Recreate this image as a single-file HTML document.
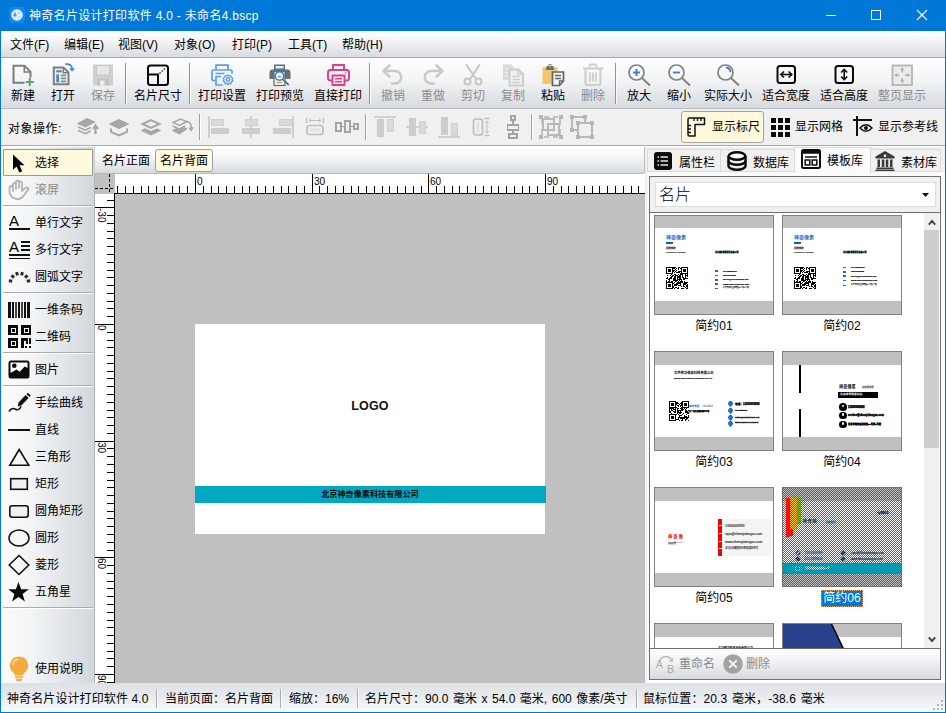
<!DOCTYPE html>
<html lang="zh-CN">
<head>
<meta charset="utf-8">
<title>神奇名片设计打印软件 4.0</title>
<style>
*{box-sizing:border-box;margin:0;padding:0}
html,body{width:946px;height:713px;overflow:hidden;background:#f0f0f0}
body{font-family:"Liberation Sans","Noto Sans CJK SC",sans-serif;font-size:12px;color:#000;position:relative;line-height:1}
.a{position:absolute}
svg{position:absolute;overflow:visible}
#frame{position:absolute;left:0;top:0;width:946px;height:713px;border:1px solid #0078d7;pointer-events:none;z-index:50}
#title{position:absolute;left:0;top:0;width:946px;height:31px;background:#0078d7;color:#fff}
#title .txt{position:absolute;left:29px;top:1px;line-height:31px;font-size:12px;white-space:nowrap;letter-spacing:.3px}
#menu{position:absolute;left:1px;top:31px;width:944px;height:26px;background:linear-gradient(#ffffff 0,#f6f7f8 30%,#e7e9eb 65%,#d9dce0 100%)}
#menu span{position:absolute;top:1px;line-height:26px;font-size:12px;white-space:nowrap}
#tb{position:absolute;left:1px;top:57px;width:944px;height:52px;background:linear-gradient(#fdfdfe 0,#f2f4f5 45%,#e3e6e9 75%,#d7dbdf 100%);border-top:1px solid #a9acaf;border-bottom:1px solid #b9bdc2}
.tl{position:absolute;top:89px;height:14px;line-height:14px;font-size:12px;white-space:nowrap;text-align:center;width:60px;margin-left:-30px}
.dis{color:#8c8c8c}
.vsep{position:absolute;width:2px;border-left:1px solid #909498;border-right:1px solid #fbfbfb}
#ob{position:absolute;left:1px;top:109px;width:944px;height:37px;background:#f0f0f0;border-bottom:1px solid #a9a9a9}
</style>
</head>
<body>
<div id="frame"></div>
<div id="title">
<svg style="left:9px;top:7px" width="16" height="16" viewBox="0 0 16 16"><rect width="16" height="16" rx="4" fill="#1787f5"/><circle cx="8" cy="8" r="5.8" fill="#dfeeff"/><circle cx="6" cy="8" r="1.6" fill="#3f96f5"/><rect x="5.5" y="5" width="1" height="3" fill="#3f96f5"/><path d="M9 6.2h2.4M9.3 10h2" stroke="#9cc8fb" stroke-width="1.2" fill="none"/></svg>
<span class="txt">神奇名片设计打印软件 4.0 - 未命名4.bscp</span>
<svg style="left:826px;top:10px" width="101" height="11" viewBox="0 0 101 11" shape-rendering="crispEdges"><rect x="0" y="5" width="10" height="1" fill="#fff"/><rect x="45.5" y="0.5" width="9" height="9" fill="none" stroke="#fff" stroke-width="1"/><path d="M91 0l10 10M101 0L91 10" stroke="#fff" stroke-width="1.1" fill="none" shape-rendering="auto"/></svg>
</div>
<div id="menu">
<span style="left:9px">文件(F)</span><span style="left:63px">编辑(E)</span><span style="left:117px">视图(V)</span><span style="left:173px">对象(O)</span><span style="left:231px">打印(P)</span><span style="left:287px">工具(T)</span><span style="left:341px">帮助(H)</span>
</div>
<div id="tb"></div>
<!-- toolbar icons -->
<svg style="left:11px;top:63px" width="24" height="24" viewBox="0 0 24 24" fill="none"><path d="M13.500 19.700H2.500V2.800h11l6 6v5.700" stroke="#7d7d7d" stroke-width="2" stroke-linejoin="miter"/><path d="M13.300 2.800v6.200h6.200" stroke="#7d7d7d" stroke-width="1.600"/><path d="M14.800 19h8M18.800 15v8" stroke="#5aa083" stroke-width="2"/></svg>
<svg style="left:51px;top:63px" width="24" height="24" viewBox="0 0 24 24" fill="none"><path d="M2.800 4.500h9.700l5 5V21.300H2.800z" stroke="#7d7d7d" stroke-width="2" fill="#eef2f6"/><path d="M12.300 4.500v5.200h5.200" stroke="#7d7d7d" stroke-width="1.500"/><rect x="5.300" y="7.200" width="5.400" height="2.200" fill="#4a86c8"/><rect x="5.300" y="11.300" width="2.700" height="8.200" fill="#4a86c8"/><path d="M9.800 12.400h5.400M9.800 15.400h5.400M9.800 18.400h5.400" stroke="#8a8a8a" stroke-width="1.600"/><path d="M14.300 1.200c4.200-.6 6.700 1.300 6.800 4.800" stroke="#4a86c8" stroke-width="1.800"/><path d="M18.200 5.400l2.900 3.300 2.800-3.500z" fill="#4a86c8"/></svg>
<svg style="left:91px;top:63px" width="24" height="24" viewBox="0 0 24 24"><rect x="2" y="1.500" width="20" height="21" fill="#d0d0d0"/><rect x="5.500" y="2.500" width="13" height="9.500" fill="#e6e6e6" stroke="#c6c6c6" stroke-width="1"/><rect x="6" y="15.500" width="12" height="7" fill="#c2c2c2"/><rect x="9" y="17.500" width="4.500" height="5" fill="#ededed"/></svg>
<svg style="left:146px;top:63px" width="24" height="24" viewBox="0 0 24 24" fill="none"><rect x="2" y="2.5" width="20" height="19.5" rx="2.5" stroke="#0a0a0a" stroke-width="2"/><path d="M2 11.5h10V22" stroke="#0a0a0a" stroke-width="2"/><path d="M13.5 10.5l6.5-6" stroke="#222" stroke-width="1.5" stroke-dasharray="1.4 1.6"/></svg>
<svg style="left:210px;top:63px" width="24" height="24" viewBox="0 0 24 24" fill="none" stroke="#5b9cec" stroke-width="1.700"><path d="M6 7V2.200h12V7"/><path d="M5 17.500H3.600Q2 17.500 2 15.900V8.600Q2 7 3.600 7h16.800Q22 7 22 8.600V10.500"/><path d="M5.500 10.500h9M5.500 13.500h5.500"/><path d="M12.500 22H6v-8.500"/><circle cx="18" cy="16.500" r="1.700" stroke-width="1.400"/><path d="M18 11.800l1.100 1.300 1.700-.4.400 1.700 1.600.8-.8 1.500.8 1.500-1.600.8-.4 1.700-1.700-.4-1.100 1.300-1.100-1.300-1.700.4-.4-1.700-1.600-.8.800-1.500-.8-1.500 1.600-.8.400-1.700 1.700.4z" stroke-width="1.300"/></svg>
<svg style="left:268px;top:63px" width="24" height="24" viewBox="0 0 24 24" fill="none"><rect x="6" y="1.500" width="11" height="6" fill="#6a6a6a"/><rect x="7.500" y="3" width="8" height="2.500" fill="#e8eef5"/><path d="M1.500 9.500q0-3 3-3h15q3 0 3 3v6.500h-21z" fill="#6d6d6d"/><rect x="6" y="8" width="11" height="14.500" fill="#f1f1f1" stroke="#6a6a6a" stroke-width="1.200"/><rect x="6" y="7" width="11" height="2" fill="#3c78b8"/><path d="M8.500 19.500h6" stroke="#e0a040" stroke-width="1.200"/><circle cx="11.500" cy="13" r="4.300" fill="#eaf2fb" stroke="#3c78b8" stroke-width="1.500"/><path d="M9.500 14.200q2-3 4 0z" fill="#777"/><path d="M14.800 16.300l6 5.700" stroke="#3c78b8" stroke-width="1.800"/></svg>
<svg style="left:326px;top:63px" width="24" height="24" viewBox="0 0 24 24" fill="none" stroke="#e6388c" stroke-width="1.900"><path d="M7 7V2h11v5"/><path d="M6.500 17.500H4.500Q2 17.500 2 15V9.500Q2 7 4.500 7h16Q23 7 23 9.500V15q0 2.500-2.500 2.500H18.500"/><path d="M6.500 12.500h12V22h-12z"/><path d="M9 15.700h7M9 18.700h7" stroke-width="1.500"/><circle cx="19.500" cy="10" r=".8" fill="#e6388c" stroke="none"/></svg>
<svg style="left:381px;top:63px" width="24" height="24" viewBox="0 0 24 24" fill="none" stroke="#c9c9c9" stroke-width="2.600" stroke-linecap="round" stroke-linejoin="round"><path d="M8.500 2.500L2.500 8l6 5.500"/><path d="M3.500 8h10.500a6 6 0 0 1 0 12.500h-3"/></svg>
<svg style="left:421px;top:63px" width="24" height="24" viewBox="0 0 24 24" fill="none" stroke="#c9c9c9" stroke-width="2.600" stroke-linecap="round" stroke-linejoin="round"><path d="M15.500 2.500L21.500 8l-6 5.500"/><path d="M20.500 8H10a6 6 0 0 0 0 12.500h3"/></svg>
<svg style="left:461px;top:63px" width="24" height="24" viewBox="0 0 24 24" fill="none" stroke="#c6c6c6" stroke-width="2"><path d="M5.500 2l9.500 14M18.500 2L9 16" stroke-linecap="round"/><circle cx="6.500" cy="18.500" r="3"/><circle cx="17.500" cy="18.500" r="3"/></svg>
<svg style="left:501px;top:63px" width="24" height="24" viewBox="0 0 24 24" fill="none"><path d="M2 1.500h8l3 3V17H2z" fill="#d9d9d9"/><path d="M4 6h3M4 9.500h3M4 13h3" stroke="#efefef" stroke-width="1.500"/><path d="M8.500 6.500h9l4.500 4.500v11.500H8.500z" fill="#f0f0f0" stroke="#cdcdcd" stroke-width="2"/><path d="M17 6.500V11h5" stroke="#cdcdcd" stroke-width="1.500"/><path d="M11.500 13.500h7.500M11.500 16.500h7.500M11.500 19.500h7.500" stroke="#cdcdcd" stroke-width="1.500"/></svg>
<svg style="left:541px;top:63px" width="24" height="24" viewBox="0 0 24 24" fill="none"><rect x="1.500" y="4" width="15" height="17" rx="1.500" fill="#f2c56e"/><path d="M5.500 4.500V3h2V1.200h3V3h2v1.500l1 2.500h-9z" fill="#737373"/><rect x="8" y="2" width="2" height="1.500" fill="#d9d9d9"/><path d="M11.500 9h11v9l-4 4.500h-7z" fill="#f3f3f3" stroke="#666" stroke-width="1.700"/><path d="M14 12.500h6M14 15.500h6" stroke="#666" stroke-width="1.500"/><path d="M18.500 22v-4h4" stroke="#666" stroke-width="1.300"/></svg>
<svg style="left:581px;top:63px" width="24" height="24" viewBox="0 0 24 24" fill="none" stroke="#cfcfcf"><path d="M2 5.500h20" stroke-width="2.200"/><path d="M8.500 5V3q0-1.500 1.500-1.500h4q1.500 0 1.500 1.500v2" stroke-width="1.800"/><path d="M4.500 6.500V20q0 2 2 2h11q2 0 2-2V6.500" stroke-width="2.200"/><path d="M9 9.500v9M12 9.500v9M15 9.500v9" stroke-width="1.800"/></svg>
<svg style="left:627px;top:63px" width="24" height="24" viewBox="0 0 24 24" fill="none"><circle cx="9.500" cy="9.500" r="7.500" stroke="#808080" stroke-width="1.700"/><path d="M15 15l8 7.500" stroke="#808080" stroke-width="1.900"/><path d="M6 9.500h7M9.500 6v7" stroke="#3e7ec6" stroke-width="1.800"/></svg>
<svg style="left:667px;top:63px" width="24" height="24" viewBox="0 0 24 24" fill="none"><circle cx="9.500" cy="9.500" r="7.500" stroke="#808080" stroke-width="1.700"/><path d="M15 15l8 7.500" stroke="#808080" stroke-width="1.900"/><path d="M6 9.500h7" stroke="#3e7ec6" stroke-width="1.800"/></svg>
<svg style="left:716px;top:63px" width="24" height="24" viewBox="0 0 24 24" fill="none"><circle cx="9.500" cy="9.500" r="7.500" stroke="#808080" stroke-width="1.700"/><path d="M15 15l8 7.500" stroke="#808080" stroke-width="1.900"/><path d="M10 4.500a5 5 0 0 1 4.500 4.700" stroke="#3e7ec6" stroke-width="1.800"/></svg>
<svg style="left:774px;top:63px" width="24" height="24" viewBox="0 0 24 24" fill="none" stroke="#0a0a0a"><rect x="3.500" y="3" width="17.500" height="17" rx="2.500" stroke-width="2"/><path d="M7 11.500h10.500" stroke-width="1.600"/><path d="M10 8.500l-3.200 3 3.200 3M14.500 8.500l3.200 3-3.200 3" stroke-width="1.600"/></svg>
<svg style="left:832px;top:63px" width="24" height="24" viewBox="0 0 24 24" fill="none" stroke="#0a0a0a"><rect x="3.500" y="3" width="17.500" height="17" rx="2.500" stroke-width="2"/><path d="M12.200 6.500v10" stroke-width="1.600"/><path d="M9.200 9.500l3-3.200 3 3.200M9.200 13.500l3 3.200 3-3.200" stroke-width="1.600"/></svg>
<svg style="left:890px;top:63px" width="24" height="24" viewBox="0 0 24 24" fill="none" stroke="#b4b4b4"><rect x="2.500" y="2.500" width="19.500" height="19.500" stroke-width="1.800" fill="#ebebeb"/><path d="M12.200 5v4.500M12.200 15v4.500M5 12.200h4.500M15 12.200h4.500" stroke-width="1.300" stroke="#a6a6a6"/><path d="M10.300 7l1.900-2.400 1.900 2.400zM10.300 17.500l1.900 2.400 1.900-2.400zM7 10.300l-2.400 1.900 2.400 1.900zM17.500 10.300l2.400 1.900-2.400 1.900z" fill="#a6a6a6" stroke="none"/></svg>
<!-- toolbar labels -->
<div class="tl" style="left:23px">新建</div><div class="tl" style="left:63px">打开</div><div class="tl dis" style="left:103px">保存</div>
<div class="tl" style="left:158px">名片尺寸</div>
<div class="tl" style="left:222px">打印设置</div><div class="tl" style="left:280px">打印预览</div><div class="tl" style="left:338px">直接打印</div>
<div class="tl dis" style="left:393px">撤销</div><div class="tl dis" style="left:433px">重做</div><div class="tl dis" style="left:473px">剪切</div><div class="tl dis" style="left:513px">复制</div><div class="tl" style="left:553px">粘贴</div><div class="tl dis" style="left:593px">删除</div>
<div class="tl" style="left:639px">放大</div><div class="tl" style="left:679px">缩小</div><div class="tl" style="left:728px">实际大小</div><div class="tl" style="left:786px">适合宽度</div><div class="tl" style="left:844px">适合高度</div><div class="tl dis" style="left:902px">整页显示</div>
<div class="vsep" style="left:125px;top:63px;height:41px"></div><div class="vsep" style="left:189px;top:63px;height:41px"></div><div class="vsep" style="left:369px;top:63px;height:41px"></div><div class="vsep" style="left:615px;top:63px;height:41px"></div>
<div id="ob"></div>
<div class="a" style="left:8px;top:122px;line-height:15px;font-size:12px;letter-spacing:.5px;white-space:nowrap">对象操作:</div>
<!-- layer icons -->
<svg style="left:76px;top:115px" width="24" height="24" viewBox="0 0 24 24" fill="none" stroke="#a6a6a6" stroke-width="1.600"><path d="M2.500 8.500L11 4l7 3-8.500 4.500z" fill="#a6a6a6"/><path d="M2 12l7.500 3.200 5-2.700M2 15.500l7.500 3.200 5-2.700"/><path d="M19.500 19v-7" stroke-width="2.200"/><path d="M15.800 13.800l3.700-5 3.700 5z" fill="#a6a6a6" stroke="none"/></svg>
<svg style="left:107px;top:115px" width="24" height="24" viewBox="0 0 24 24" fill="none" stroke="#a6a6a6" stroke-width="2"><path d="M2.500 9L12 4.500 21.500 9 12 13.500z" fill="#a6a6a6" stroke-width="1"/><path d="M4 13.500v3.300l8 3.700 8-3.700v-3.300"/></svg>
<svg style="left:139px;top:115px" width="24" height="24" viewBox="0 0 24 24" fill="none" stroke="#a6a6a6" stroke-width="2"><path d="M3.500 9L12 5l8.500 4-8.500 4z"/><path d="M2.500 15.500L6 13.800l6 2.800 6-2.800 3.500 1.700L12 20z" fill="#a6a6a6" stroke-width="1"/></svg>
<svg style="left:170px;top:115px" width="24" height="24" viewBox="0 0 24 24" fill="none" stroke="#a6a6a6" stroke-width="1.500"><path d="M3 7.500L10.500 4l6.500 2.500-7.500 4z"/><path d="M2.500 11l7 3 5.500-3"/><path d="M2.500 15.500l4-2 3 1.300 4.500-2.300 3 1.300L9.500 19z" fill="#a6a6a6" stroke-width="1"/><path d="M17 6.500c3 .5 4.500 3 4.300 7" stroke-width="1.600"/><path d="M18.300 12.500l3 4.300 2.400-4.500z" fill="#a6a6a6" stroke="none"/></svg>
<div class="vsep" style="left:199px;top:114px;height:26px;border-left-color:#a0a0a0;border-right-color:#fff"></div>
<!-- align icons (disabled) -->
<svg style="left:207px;top:115px" width="24" height="24" viewBox="0 0 24 24" shape-rendering="crispEdges"><rect x="1" y="1" width="2" height="22" fill="#cfcfcf"/><rect x="4" y="4" width="12" height="6" fill="#dadada" stroke="#d0d0d0"/><rect x="4" y="13" width="18" height="6" fill="#cdcdcd"/></svg>
<svg style="left:239px;top:115px" width="24" height="24" viewBox="0 0 24 24" shape-rendering="crispEdges"><rect x="11" y="1" width="2" height="22" fill="#cfcfcf"/><rect x="6" y="4" width="12" height="6" fill="#dadada" stroke="#d0d0d0"/><rect x="3" y="13" width="18" height="6" fill="#cdcdcd"/></svg>
<svg style="left:271px;top:115px" width="24" height="24" viewBox="0 0 24 24" shape-rendering="crispEdges"><rect x="21" y="1" width="2" height="22" fill="#cfcfcf"/><rect x="8" y="4" width="12" height="6" fill="#dadada" stroke="#d0d0d0"/><rect x="2" y="13" width="18" height="6" fill="#cdcdcd"/></svg>
<svg style="left:303px;top:115px" width="24" height="24" viewBox="0 0 24 24" fill="none" stroke="#bdbdbd"><path d="M3.500 3v5M20.500 3v5" stroke-width="1.300"/><path d="M6 5.500h12M8 3.800L6 5.500l2 1.700M16 3.800l2 1.700-2 1.700" stroke-width="1"/><rect x="4" y="10.500" width="16" height="9" rx="2.500" stroke-width="1.700"/><rect x="6.500" y="13.500" width="11" height="3" fill="#e2e2e2" stroke="none"/></svg>
<svg style="left:335px;top:115px" width="24" height="24" viewBox="0 0 24 24" fill="#f0f0f0" stroke="#a3a3a3" stroke-width="1.800" shape-rendering="crispEdges"><path d="M5 11.500h14" /><rect x="1" y="8" width="5" height="8"/><rect x="10" y="6" width="5" height="11"/><rect x="19" y="9" width="4" height="5"/></svg>
<div class="vsep" style="left:365px;top:114px;height:26px;border-left-color:#a0a0a0;border-right-color:#fff"></div>
<svg style="left:373px;top:115px" width="24" height="24" viewBox="0 0 24 24" shape-rendering="crispEdges"><rect x="1" y="1" width="22" height="2" fill="#cfcfcf"/><rect x="4" y="4" width="7" height="18" fill="#cdcdcd"/><rect x="14" y="4" width="6" height="12" fill="#dadada" stroke="#d0d0d0"/></svg>
<svg style="left:405px;top:115px" width="24" height="24" viewBox="0 0 24 24" shape-rendering="crispEdges"><rect x="1" y="11" width="22" height="2" fill="#cfcfcf"/><rect x="4" y="3" width="7" height="18" fill="#cdcdcd"/><rect x="14" y="6" width="6" height="12" fill="#dadada" stroke="#d0d0d0"/></svg>
<svg style="left:437px;top:115px" width="24" height="24" viewBox="0 0 24 24" shape-rendering="crispEdges"><rect x="1" y="21" width="22" height="2" fill="#cfcfcf"/><rect x="4" y="2" width="7" height="18" fill="#cdcdcd"/><rect x="14" y="8" width="6" height="12" fill="#dadada" stroke="#d0d0d0"/></svg>
<svg style="left:469px;top:115px" width="24" height="24" viewBox="0 0 24 24" fill="none" stroke="#bdbdbd"><rect x="4.500" y="4" width="9" height="16" rx="2.500" stroke-width="1.700"/><rect x="7.500" y="6.500" width="3" height="11" fill="#e2e2e2" stroke="none"/><path d="M15.500 3.500h5M15.500 20.500h5" stroke-width="1.300"/><path d="M18 6v12M16.300 8L18 6l1.700 2M16.300 16l1.700 2 1.700-2" stroke-width="1"/></svg>
<svg style="left:501px;top:115px" width="24" height="24" viewBox="0 0 24 24" fill="#f0f0f0" stroke="#a3a3a3" stroke-width="1.800" shape-rendering="crispEdges"><path d="M12 5v14"/><rect x="10" y="1" width="4" height="4"/><rect x="6.500" y="10" width="11" height="5"/><rect x="8" y="19" width="8" height="4"/></svg>
<div class="vsep" style="left:531px;top:114px;height:26px;border-left-color:#a0a0a0;border-right-color:#fff"></div>
<svg style="left:539px;top:115px" width="24" height="24" viewBox="0 0 24 24" fill="none" shape-rendering="crispEdges"><path d="M3 4v6M3 14v6M21 4v6M21 14v6M5 2h5M14 2h5M5 22h5M14 22h5" stroke="#c4c4c4" stroke-width="1.400"/><rect x="4" y="4" width="11" height="11" stroke="#b9b9b9" stroke-width="1.700"/><rect x="9" y="9" width="11" height="11" stroke="#b9b9b9" stroke-width="1.700"/><path d="M0 0h4v4H0zM20 0h4v4h-4zM0 20h4v4H0zM20 20h4v4h-4z" fill="#b5b5b5"/></svg>
<svg style="left:570px;top:115px" width="24" height="24" viewBox="0 0 24 24" fill="none" shape-rendering="crispEdges"><rect x="2" y="2" width="13" height="13" stroke="#b9b9b9" stroke-width="1.600"/><rect x="8" y="8" width="14" height="14" stroke="#b9b9b9" stroke-width="1.800" fill="#f0f0f0"/><path d="M0 0h4v4H0zM13 0h4v4h-4zM0 13h4v4H0zM6 6h4v4H6zM20 6h4v4h-4zM6 20h4v4H6zM20 20h4v4h-4z" fill="#b5b5b5"/></svg>
<!-- right toggles -->
<div class="a" style="left:681px;top:111px;width:83px;height:32px;border:1px solid #a3a3a3;border-radius:3px;background:#fff9dc"></div>
<svg style="left:687px;top:117px" width="20" height="20" viewBox="0 0 20 20" fill="none" stroke="#111" stroke-width="1.500"><path d="M2.500 1h15v6.500H8V19H2.500Q1 19 1 17.500V2.500Q1 1 2.500 1z" stroke-linejoin="round"/><path d="M7 1v3M10.500 1v3M14 1v3M1 8.500h3M1 12h3M1 15.500h3" stroke-width="1.300"/></svg>
<div class="a" style="left:712px;top:120px;line-height:15px;font-size:12px;white-space:nowrap">显示标尺</div>
<svg style="left:771px;top:118px" width="19" height="19" viewBox="0 0 19 19" shape-rendering="crispEdges" fill="#0a0a0a"><path d="M0 0h5v5H0zM7 0h5v5H7zM14 0h5v5h-5zM0 7h5v5H0zM7 7h5v5H7zM14 7h5v5h-5zM0 14h5v5H0zM7 14h5v5H7zM14 14h5v5h-5z"/></svg>
<div class="a" style="left:795px;top:120px;line-height:15px;font-size:12px;white-space:nowrap">显示网格</div>
<svg style="left:852px;top:116px" width="21" height="21" viewBox="0 0 21 21" fill="none" stroke="#111"><path d="M5 0v20M1 4h19" stroke-width="1.500" shape-rendering="crispEdges"/><path d="M8 12q6-6.500 12 0-6 6.500-12 0z" stroke-width="1.500"/><circle cx="14" cy="12" r="2" fill="#111" stroke="none"/></svg>
<div class="a" style="left:878px;top:120px;line-height:15px;font-size:12px;white-space:nowrap">显示参考线</div>
<style>
#lp{position:absolute;left:1px;top:147px;width:93px;height:536px;background:linear-gradient(90deg,#fcfcfd 0,#f1f3f4 35%,#e1e5e8 70%,#d2d7db 100%);border-bottom-right-radius:3px}
.lt{position:absolute;left:35px;height:16px;line-height:16px;font-size:12px;white-space:nowrap;margin-top:-7px}
.ls{position:absolute;left:3px;width:90px;height:2px;border-top:1px solid #a7acb1;border-bottom:1px solid #fff}
</style>
<div class="a" style="left:1px;top:146px;width:944px;height:1px;background:#fff"></div>
<div id="lp"></div>
<div class="a" style="left:94px;top:147px;width:1px;height:27px;background:#cdd2d6"></div><div class="a" style="left:94px;top:174px;width:1px;height:509px;background:#b0b3b6"></div>
<div class="a" style="left:3px;top:149px;width:90px;height:27px;border:1px solid #9a9a9a;border-radius:1px;background:#fff9de"></div>
<svg style="left:12px;top:154px" width="14" height="19" viewBox="0 0 14 19"><path d="M1 0.500v15.200l3.600-3.300 2.700 6.100 2.900-1.300-2.700-5.900h5z" fill="#000"/></svg>
<div class="lt" style="top:162px">选择</div>
<svg style="left:7px;top:178px" width="24" height="24" viewBox="0 0 24 24" fill="none" stroke="#b4b4b4" stroke-width="1.800" stroke-linecap="round" stroke-linejoin="round"><path d="M6 13V6.500a1.500 1.500 0 0 1 3 0V11M9 10V4a1.500 1.500 0 0 1 3 0v6M12 10V5a1.500 1.500 0 0 1 3 0v8c1.500-1.500 3-3.500 5-3.500 1.500 0 2 1.200 1 2.300-2 2.200-3.500 5.500-6 7.700-2 1.700-5.500 2-7.500 .8C3.500 19 2.500 16.500 2.500 13V9.500a1.500 1.500 0 0 1 3 0"/></svg>
<div class="lt" style="top:189px;color:#8c8c8c">滚屏</div>
<div class="ls" style="top:205px"></div>
<div class="a" style="left:9px;top:213px;font-size:15px;line-height:16px;width:12px">A</div>
<div class="a" style="left:9px;top:228px;width:21px;height:2px;background:#111"></div>
<div class="lt" style="top:222px">单行文字</div>
<div class="a" style="left:9px;top:239px;font-size:15px;line-height:16px;width:12px">A</div>
<svg style="left:9px;top:240px" width="21" height="20" viewBox="0 0 21 20" shape-rendering="crispEdges" fill="#111"><rect x="12" y="1" width="9" height="1.500"/><rect x="12" y="5" width="9" height="1.500"/><rect x="12" y="9" width="9" height="1.500"/><rect x="0" y="14" width="21" height="1.500"/><rect x="0" y="17.500" width="21" height="1.500"/></svg>
<div class="lt" style="top:249px">多行文字</div>
<svg style="left:7px;top:268px" width="24" height="16" viewBox="0 0 24 16" fill="#2a2a2a"><g transform="translate(12.500 14.500)"><rect x="-1.500" y="-10.800" width="3" height="3.400" transform="rotate(-80)"/><rect x="-1.500" y="-10.800" width="3" height="3.400" transform="rotate(-48)"/><rect x="-1.500" y="-10.800" width="3" height="3.400" transform="rotate(-16)"/><rect x="-1.500" y="-10.800" width="3" height="3.400" transform="rotate(16)"/><rect x="-1.500" y="-10.800" width="3" height="3.400" transform="rotate(48)"/><rect x="-1.500" y="-10.800" width="3" height="3.400" transform="rotate(80)"/></g></svg>
<div class="lt" style="top:276px">圆弧文字</div>
<div class="ls" style="top:292px"></div>
<svg style="left:8px;top:302px" width="22" height="16" viewBox="0 0 22 16" shape-rendering="crispEdges" fill="#111"><rect x="0" y="0" width="3" height="16"/><rect x="4" y="0" width="2" height="16"/><rect x="7" y="0" width="2" height="16" fill="#444"/><rect x="10" y="0" width="2" height="16"/><rect x="13" y="0" width="2" height="16" fill="#444"/><rect x="16" y="0" width="2" height="16"/><rect x="19" y="0" width="3" height="16"/></svg>
<div class="lt" style="top:309px">一维条码</div>
<svg style="left:8px;top:325px" width="23" height="23" viewBox="0 0 23 23" shape-rendering="crispEdges" fill="none" stroke="#0a0a0a" stroke-width="2.500"><rect x="1.250" y="1.250" width="7.500" height="7.500"/><rect x="14.250" y="1.250" width="7.500" height="7.500"/><rect x="1.250" y="14.250" width="7.500" height="7.500"/><g fill="#0a0a0a" stroke="none"><rect x="4" y="4" width="2.500" height="2.500"/><rect x="17" y="4" width="2.500" height="2.500"/><rect x="4" y="17" width="2.500" height="2.500"/><rect x="13" y="13" width="2.500" height="10"/><rect x="13" y="13" width="7" height="2.500"/><rect x="17.500" y="15" width="2.500" height="3.500"/><rect x="20.500" y="13" width="2.500" height="5.500"/><rect x="17" y="20.500" width="2" height="2.500"/><rect x="21" y="20.500" width="2" height="2.500"/></g></svg>
<div class="lt" style="top:336px">二维码</div>
<div class="ls" style="top:352px"></div>
<svg style="left:8px;top:360px" width="22" height="19" viewBox="0 0 22 19"><rect x="0.500" y="0.500" width="21" height="18" rx="2.500" fill="#0a0a0a"/><path d="M2.500 2.500h17v5.500l-2.800-1.500-5 5.200-3.200-2.300-6 3.600z" fill="#fafafa"/><circle cx="6.300" cy="5.800" r="2.300" fill="#0a0a0a"/></svg>
<div class="lt" style="top:369px">图片</div>
<div class="ls" style="top:385px"></div>
<svg style="left:8px;top:392px" width="23" height="21" viewBox="0 0 23 21" fill="none"><path d="M10.800 10.300l6.800-7.200 3 2.800-7 7.300-3.900 1.400z" fill="#111"/><path d="M18.500 2.200l1.300-1.400 3 2.800-1.300 1.400z" fill="#111"/><path d="M1 19.500c2.500-4 4.500-3.500 6.500-2.300 2 1.200 4.500 .3 5.500-3" stroke="#111" stroke-width="1.600"/></svg>
<div class="lt" style="top:402px">手绘曲线</div>
<div class="a" style="left:8px;top:429px;width:22px;height:2px;background:#111"></div>
<div class="lt" style="top:429px">直线</div>
<svg style="left:8px;top:447px" width="23" height="20" viewBox="0 0 23 20" fill="none" stroke="#111" stroke-width="1.600"><path d="M11.200 2.500L1.800 18.300h19z"/></svg>
<div class="lt" style="top:456px">三角形</div>
<svg style="left:9px;top:477px" width="20" height="14" viewBox="0 0 20 14"><rect x="1.700" y="1.700" width="16.600" height="10.600" fill="#eef0f1" stroke="#111" stroke-width="1.600"/></svg>
<div class="lt" style="top:483px">矩形</div>
<svg style="left:8px;top:504px" width="22" height="15" viewBox="0 0 22 15"><rect x="1.800" y="1.800" width="18.400" height="11.400" rx="2.500" fill="#eef0f1" stroke="#111" stroke-width="1.600"/></svg>
<div class="lt" style="top:510px">圆角矩形</div>
<svg style="left:8px;top:529px" width="22" height="18" viewBox="0 0 22 18" fill="none" stroke="#111" stroke-width="1.500"><ellipse cx="11" cy="9" rx="10" ry="8"/></svg>
<div class="lt" style="top:537px">圆形</div>
<svg style="left:8px;top:554px" width="22" height="22" viewBox="0 0 22 22" fill="none" stroke="#111" stroke-width="1.600"><path d="M11 1.500L20.800 11 11 20.500 1.200 11z"/></svg>
<div class="lt" style="top:564px">菱形</div>
<svg style="left:8px;top:582px" width="21" height="20" viewBox="0 0 21 20"><path d="M10.500 0l2.600 7.300h7.700l-6.200 4.600 2.300 7.600-6.400-4.500-6.400 4.500 2.300-7.600L.2 7.300h7.700z" fill="#0a0a0a"/></svg>
<div class="lt" style="top:591px">五角星</div>
<div class="ls" style="top:607px"></div>
<svg style="left:9px;top:656px" width="20" height="26" viewBox="0 0 20 26"><path d="M10 .5a9 9 0 0 0-5.200 16.400c.8.700 1.200 1.500 1.200 2.600h8c0-1.100.4-1.900 1.200-2.600A9 9 0 0 0 10 .5z" fill="#f3ab3c"/><rect x="6" y="20.300" width="8" height="1.600" fill="#f3ab3c"/><path d="M6.500 22.700h7l-1.300 2.500h-4.400z" fill="#f3ab3c"/><path d="M4 8.500a6 6 0 0 1 4.500-5.200" stroke="#fbe3b3" stroke-width="1.300" fill="none" stroke-linecap="round"/></svg>
<div class="lt" style="top:668px">使用说明</div>
<style>
#tabs{position:absolute;left:95px;top:147px;width:550px;height:27px;background:linear-gradient(#ffffff 0,#f5f6f7 40%,#e4e7ea 75%,#d6dade 100%);border-bottom-right-radius:3px;border-right:1px solid #b9bdc1;border-bottom:1px solid #b4b8bc}
.rl{position:absolute;font-size:10px;line-height:10px;white-space:nowrap;color:#000}
</style>
<div id="tabs"></div>
<div class="a" style="left:102px;top:153px;line-height:16px;font-size:12px;white-space:nowrap">名片正面</div>
<div class="a" style="left:155px;top:149px;width:58px;height:23px;border:1px solid #9c9c9c;border-radius:3px;background:#fff9de"></div>
<div class="a" style="left:160px;top:153px;line-height:16px;font-size:12px;white-space:nowrap">名片背面</div>
<div class="a" style="left:95px;top:174px;width:550px;height:20px;background:#fff"></div>
<div class="a" style="left:95px;top:194px;width:20px;height:489px;background:#fff"></div>
<div class="a" style="left:95px;top:174px;width:20px;height:20px;background:#c0c0c0"></div>
<div class="a" style="left:115px;top:194px;width:530px;height:489px;background:#c0c0c0"></div>
<div class="a" style="left:195px;top:324px;width:350px;height:210px;background:#fff"></div>
<div class="a" style="left:195px;top:486px;width:351px;height:17px;background:#00a8c2"></div>
<div class="a" style="left:195px;top:398px;width:350px;text-align:center;font-weight:bold;font-size:12.5px;line-height:16px;letter-spacing:.2px;color:#111">LOGO</div>
<div class="a" style="left:195px;top:488.600px;width:350px;text-align:center;font-weight:bold;font-size:8.150px;line-height:12px;color:#000">北京神奇像素科技有限公司</div>
<svg style="left:95px;top:174px" width="551" height="509" viewBox="0 0 551 509" shape-rendering="crispEdges" fill="#000"><path d="M14.500 0v20M0 14.500h20" stroke="#000" stroke-width="1" stroke-dasharray="3 2" fill="none"/><path d="M19 19h531v1H19zM19 19h1v490h-1zM22 12h1v7h-1zM30 12h1v7h-1zM38 12h1v7h-1zM46 12h1v7h-1zM53 12h1v7h-1zM61 12h1v7h-1zM69 12h1v7h-1zM77 12h1v7h-1zM84 12h1v7h-1zM92 12h1v7h-1zM100 0h1v19h-1zM108 12h1v7h-1zM116 12h1v7h-1zM123 12h1v7h-1zM131 12h1v7h-1zM139 12h1v7h-1zM147 12h1v7h-1zM154 12h1v7h-1zM162 12h1v7h-1zM170 12h1v7h-1zM178 12h1v7h-1zM186 12h1v7h-1zM193 12h1v7h-1zM201 12h1v7h-1zM209 12h1v7h-1zM217 0h1v19h-1zM224 12h1v7h-1zM232 12h1v7h-1zM240 12h1v7h-1zM248 12h1v7h-1zM256 12h1v7h-1zM263 12h1v7h-1zM271 12h1v7h-1zM279 12h1v7h-1zM287 12h1v7h-1zM294 12h1v7h-1zM302 12h1v7h-1zM310 12h1v7h-1zM318 12h1v7h-1zM326 12h1v7h-1zM333 0h1v19h-1zM341 12h1v7h-1zM349 12h1v7h-1zM357 12h1v7h-1zM364 12h1v7h-1zM372 12h1v7h-1zM380 12h1v7h-1zM388 12h1v7h-1zM396 12h1v7h-1zM403 12h1v7h-1zM411 12h1v7h-1zM419 12h1v7h-1zM427 12h1v7h-1zM434 12h1v7h-1zM442 12h1v7h-1zM450 0h1v19h-1zM458 12h1v7h-1zM466 12h1v7h-1zM473 12h1v7h-1zM481 12h1v7h-1zM489 12h1v7h-1zM497 12h1v7h-1zM504 12h1v7h-1zM512 12h1v7h-1zM520 12h1v7h-1zM528 12h1v7h-1zM536 12h1v7h-1zM543 12h1v7h-1zM12 26h7v1h-7zM0 33h19v1H0zM12 41h7v1h-7zM12 49h7v1h-7zM12 57h7v1h-7zM12 64h7v1h-7zM12 72h7v1h-7zM12 80h7v1h-7zM12 88h7v1h-7zM12 96h7v1h-7zM12 103h7v1h-7zM12 111h7v1h-7zM12 119h7v1h-7zM12 127h7v1h-7zM12 134h7v1h-7zM12 142h7v1h-7zM0 150h19v1H0zM12 158h7v1h-7zM12 166h7v1h-7zM12 173h7v1h-7zM12 181h7v1h-7zM12 189h7v1h-7zM12 197h7v1h-7zM12 204h7v1h-7zM12 212h7v1h-7zM12 220h7v1h-7zM12 228h7v1h-7zM12 236h7v1h-7zM12 243h7v1h-7zM12 251h7v1h-7zM12 259h7v1h-7zM0 267h19v1H0zM12 274h7v1h-7zM12 282h7v1h-7zM12 290h7v1h-7zM12 298h7v1h-7zM12 306h7v1h-7zM12 313h7v1h-7zM12 321h7v1h-7zM12 329h7v1h-7zM12 337h7v1h-7zM12 344h7v1h-7zM12 352h7v1h-7zM12 360h7v1h-7zM12 368h7v1h-7zM12 376h7v1h-7zM0 383h19v1H0zM12 391h7v1h-7zM12 399h7v1h-7zM12 407h7v1h-7zM12 414h7v1h-7zM12 422h7v1h-7zM12 430h7v1h-7zM12 438h7v1h-7zM12 446h7v1h-7zM12 453h7v1h-7zM12 461h7v1h-7zM12 469h7v1h-7zM12 477h7v1h-7zM12 484h7v1h-7zM12 492h7v1h-7zM0 500h19v1H0zM12 508h7v1h-7z"/></svg>
<div class="rl" style="left:197px;top:177px">0</div><div class="rl" style="left:314px;top:177px">30</div><div class="rl" style="left:430px;top:177px">60</div><div class="rl" style="left:547px;top:177px">90</div><div class="rl" style="left:106px;top:208px;transform-origin:0 0;transform:rotate(90deg)">-30</div><div class="rl" style="left:106px;top:325px;transform-origin:0 0;transform:rotate(90deg)">0</div><div class="rl" style="left:106px;top:442px;transform-origin:0 0;transform:rotate(90deg)">30</div><div class="rl" style="left:106px;top:558px;transform-origin:0 0;transform:rotate(90deg)">60</div><div class="rl" style="left:106px;top:675px;transform-origin:0 0;transform:rotate(90deg)">90</div>
<style>
#rp{position:absolute;left:647px;top:172px;width:298px;height:511px;background:#fbfbfb}
.rt{position:absolute;top:149px;height:23px;background:#f0f0f0;border:1px solid #dadada}
.rtt{position:absolute;top:155px;line-height:16px;font-size:12px;white-space:nowrap}
#rf{position:absolute;left:649px;top:176px;width:292px;height:504px;border:1px solid #6f6f6f;background:#f0f0f0}
#rlist{position:absolute;left:650px;top:212px;width:290px;height:437px;background:#fff;border-top:1px solid #6f6f6f;border-bottom:1px solid #6f6f6f;overflow:hidden}
.th{position:absolute;width:120px;height:100px;border:1px solid #828282;background:#c0c0c0;overflow:hidden}
.th .c{position:absolute;left:0;top:13px;width:118px;height:72px;background:#fff}
.th .c1{top:12px;height:73px}
.th i{position:absolute;display:block}
.lb{position:absolute;width:120px;text-align:center;font-size:12px;line-height:16px;white-space:nowrap}
.tt{position:absolute;white-space:nowrap;transform-origin:0 0;line-height:1;font-size:10px}
</style>
<div class="a" style="left:645px;top:147px;width:300px;height:536px;background:#f0f0f0"></div>
<div id="rp"></div>
<div class="rt" style="left:647px;width:74px"></div><div class="rt" style="left:720px;width:75px"></div><div class="rt" style="left:870px;width:71px"></div>
<div class="rt" style="left:794px;width:77px;top:147px;height:26px;background:#fbfbfb;border-bottom:none"></div>
<svg style="left:654px;top:152px" width="18" height="18" viewBox="0 0 18 18"><rect width="18" height="18" rx="3" fill="#0c0c0c"/><path d="M6.500 5h7.500M6.500 9h7.500M6.500 13h7.500" stroke="#e6e6e6" stroke-width="1.600"/><path d="M3.500 5h1.500M3.500 9h1.500M3.500 13h1.500" stroke="#e6e6e6" stroke-width="1.400"/></svg>
<div class="rtt" style="left:679px">属性栏</div>
<svg style="left:727px;top:151px" width="20" height="20" viewBox="0 0 20 20" fill="none" stroke="#0c0c0c" stroke-width="2.500"><ellipse cx="10" cy="5" rx="8.300" ry="3.700" fill="#fbfbfb"/><path d="M1.500 5v10c0 2.100 3.800 3.800 8.500 3.800s8.500-1.700 8.500-3.800V5"/><path d="M1.500 10c0 2.100 3.800 3.800 8.500 3.800s8.500-1.700 8.500-3.800" /></svg>
<div class="rtt" style="left:753px">数据库</div>
<svg style="left:801px;top:149px" width="20" height="20" viewBox="0 0 20 20" fill="none" stroke="#0c0c0c"><rect x="1" y="1" width="18" height="18" rx="1.500" stroke-width="2"/><path d="M1 3h18" stroke-width="3.500"/><path d="M4 8h12" stroke-width="1.500"/><rect x="4.200" y="11" width="4.600" height="5" stroke-width="1.500"/><rect x="11.200" y="11" width="4.600" height="5" stroke-width="1.500"/></svg>
<div class="rtt" style="left:827px;top:153px">模板库</div>
<svg style="left:875px;top:151px" width="20" height="20" viewBox="0 0 20 20" fill="#3a3a3a"><path d="M10 0L.500 5.500V7.500h19V5.500z"/><circle cx="10" cy="4.700" r="1.300" fill="#fbfbfb"/><rect x="2.500" y="8.500" width="2.500" height="7.500"/><rect x="6.800" y="8.500" width="2.500" height="7.500"/><rect x="10.800" y="8.500" width="2.500" height="7.500"/><rect x="15" y="8.500" width="2.500" height="7.500"/><rect x="1.500" y="16.500" width="17" height="1.500"/><rect x=".5" y="18.500" width="19" height="1.500"/></svg>
<div class="rtt" style="left:901px">素材库</div>
<div id="rf"></div>
<div class="a" style="left:655px;top:182px;width:281px;height:25px;background:#fff;border:1px solid #dcdcdc"></div>
<div class="a" style="left:659px;top:185px;font-size:16px;line-height:20px;font-weight:300;white-space:nowrap;font-family:'Liberation Sans','Noto Sans CJK SC',sans-serif">名片</div>
<svg style="left:922px;top:193px" width="7" height="4" viewBox="0 0 7 4"><path d="M0 0h7L3.500 4z" fill="#111"/></svg>
<div id="rlist">
<div class="th" style="left:4px;top:2px"><div class="c c1"><span class="tt" style="left:11px;top:6.5px;transform:scale(0.500);color:#1c6ec4;font-weight:bold;">神奇像素</span><i style="left:11px;top:14px;width:7px;height:2px;background:#0b63b6"></i><span class="tt" style="left:11px;top:19.30000000000001px;transform:scale(0.190);color:#111;font-weight:bold;-webkit-text-stroke:0.5px #111;">总经理助理</span><span class="tt" style="left:11px;top:23px;transform:scale(0.230);color:#444;-webkit-text-stroke:0.7px #444;">Marketing Manager</span><span class="tt" style="left:60px;top:23px;transform:scale(0.195);color:#000;font-weight:bold;-webkit-text-stroke:0.9px #000;">北京神奇像素科技有限公司</span><i style="left:60px;top:42.30000000000001px;width:3px;height:1.5px;background:#1c6ec4"></i><span class="tt" style="left:68px;top:41.60000000000001px;transform:scale(0.210);color:#111;-webkit-text-stroke:1px #111;">010-88886666</span><i style="left:60px;top:46.80000000000001px;width:3px;height:1.5px;background:#1c6ec4"></i><span class="tt" style="left:68px;top:46.10000000000001px;transform:scale(0.210);color:#111;-webkit-text-stroke:1px #111;">13800008888</span><i style="left:60px;top:51px;width:3px;height:1.5px;background:#1c6ec4"></i><span class="tt" style="left:68px;top:50.3px;transform:scale(0.200);color:#111;-webkit-text-stroke:0.9px #111;">service@shenqixiangsu.com</span><i style="left:60px;top:55.19999999999999px;width:3px;height:1.5px;background:#1c6ec4"></i><span class="tt" style="left:68px;top:54.499999999999986px;transform:scale(0.240);color:#111;-webkit-text-stroke:0.9px #111;">www.shenqixiangsu.com</span><i style="left:60px;top:59.80000000000001px;width:3px;height:1.5px;background:#1c6ec4"></i><span class="tt" style="left:68px;top:59.10000000000001px;transform:scale(0.175);color:#111;-webkit-text-stroke:0.3px #111;">北京市朝阳区神奇路88号院8号楼</span></div></div><svg style="left:16px;top:54px" width="22" height="22" viewBox="0 0 22 22" shape-rendering="crispEdges"><path d="M0 0h1v1h-1zM1 0h1v1h-1zM2 0h1v1h-1zM3 0h1v1h-1zM4 0h1v1h-1zM5 0h1v1h-1zM6 0h1v1h-1zM7 0h1v1h-1zM8 0h1v1h-1zM9 0h1v1h-1zM12 0h1v1h-1zM13 0h1v1h-1zM15 0h1v1h-1zM16 0h1v1h-1zM17 0h1v1h-1zM18 0h1v1h-1zM19 0h1v1h-1zM20 0h1v1h-1zM21 0h1v1h-1zM0 1h1v1h-1zM6 1h1v1h-1zM7 1h1v1h-1zM8 1h1v1h-1zM10 1h1v1h-1zM12 1h1v1h-1zM14 1h1v1h-1zM15 1h1v1h-1zM21 1h1v1h-1zM0 2h1v1h-1zM2 2h1v1h-1zM3 2h1v1h-1zM4 2h1v1h-1zM6 2h1v1h-1zM9 2h1v1h-1zM12 2h1v1h-1zM15 2h1v1h-1zM17 2h1v1h-1zM18 2h1v1h-1zM19 2h1v1h-1zM21 2h1v1h-1zM0 3h1v1h-1zM2 3h1v1h-1zM3 3h1v1h-1zM4 3h1v1h-1zM6 3h1v1h-1zM7 3h1v1h-1zM8 3h1v1h-1zM10 3h1v1h-1zM15 3h1v1h-1zM17 3h1v1h-1zM18 3h1v1h-1zM19 3h1v1h-1zM21 3h1v1h-1zM0 4h1v1h-1zM2 4h1v1h-1zM3 4h1v1h-1zM4 4h1v1h-1zM6 4h1v1h-1zM7 4h1v1h-1zM9 4h1v1h-1zM12 4h1v1h-1zM13 4h1v1h-1zM14 4h1v1h-1zM15 4h1v1h-1zM17 4h1v1h-1zM18 4h1v1h-1zM19 4h1v1h-1zM21 4h1v1h-1zM0 5h1v1h-1zM6 5h1v1h-1zM8 5h1v1h-1zM10 5h1v1h-1zM11 5h1v1h-1zM12 5h1v1h-1zM13 5h1v1h-1zM15 5h1v1h-1zM21 5h1v1h-1zM0 6h1v1h-1zM1 6h1v1h-1zM2 6h1v1h-1zM3 6h1v1h-1zM4 6h1v1h-1zM5 6h1v1h-1zM6 6h1v1h-1zM14 6h1v1h-1zM15 6h1v1h-1zM16 6h1v1h-1zM17 6h1v1h-1zM18 6h1v1h-1zM19 6h1v1h-1zM20 6h1v1h-1zM21 6h1v1h-1zM5 7h1v1h-1zM8 7h1v1h-1zM9 7h1v1h-1zM12 7h1v1h-1zM14 7h1v1h-1zM15 7h1v1h-1zM16 7h1v1h-1zM19 7h1v1h-1zM21 7h1v1h-1zM1 8h1v1h-1zM4 8h1v1h-1zM6 8h1v1h-1zM7 8h1v1h-1zM9 8h1v1h-1zM10 8h1v1h-1zM11 8h1v1h-1zM13 8h1v1h-1zM14 8h1v1h-1zM16 8h1v1h-1zM19 8h1v1h-1zM20 8h1v1h-1zM21 8h1v1h-1zM5 9h1v1h-1zM6 9h1v1h-1zM8 9h1v1h-1zM9 9h1v1h-1zM11 9h1v1h-1zM12 9h1v1h-1zM13 9h1v1h-1zM14 9h1v1h-1zM16 9h1v1h-1zM19 9h1v1h-1zM21 9h1v1h-1zM1 10h1v1h-1zM4 10h1v1h-1zM5 10h1v1h-1zM8 10h1v1h-1zM9 10h1v1h-1zM11 10h1v1h-1zM12 10h1v1h-1zM13 10h1v1h-1zM14 10h1v1h-1zM16 10h1v1h-1zM17 10h1v1h-1zM19 10h1v1h-1zM0 11h1v1h-1zM1 11h1v1h-1zM3 11h1v1h-1zM4 11h1v1h-1zM5 11h1v1h-1zM7 11h1v1h-1zM8 11h1v1h-1zM9 11h1v1h-1zM11 11h1v1h-1zM13 11h1v1h-1zM14 11h1v1h-1zM17 11h1v1h-1zM18 11h1v1h-1zM19 11h1v1h-1zM20 11h1v1h-1zM21 11h1v1h-1zM2 12h1v1h-1zM3 12h1v1h-1zM7 12h1v1h-1zM8 12h1v1h-1zM9 12h1v1h-1zM11 12h1v1h-1zM12 12h1v1h-1zM13 12h1v1h-1zM14 12h1v1h-1zM15 12h1v1h-1zM17 12h1v1h-1zM18 12h1v1h-1zM0 13h1v1h-1zM3 13h1v1h-1zM7 13h1v1h-1zM8 13h1v1h-1zM9 13h1v1h-1zM10 13h1v1h-1zM11 13h1v1h-1zM13 13h1v1h-1zM15 13h1v1h-1zM0 14h1v1h-1zM2 14h1v1h-1zM3 14h1v1h-1zM5 14h1v1h-1zM6 14h1v1h-1zM9 14h1v1h-1zM10 14h1v1h-1zM12 14h1v1h-1zM14 14h1v1h-1zM15 14h1v1h-1zM16 14h1v1h-1zM18 14h1v1h-1zM0 15h1v1h-1zM1 15h1v1h-1zM2 15h1v1h-1zM3 15h1v1h-1zM4 15h1v1h-1zM5 15h1v1h-1zM6 15h1v1h-1zM8 15h1v1h-1zM11 15h1v1h-1zM12 15h1v1h-1zM13 15h1v1h-1zM14 15h1v1h-1zM15 15h1v1h-1zM16 15h1v1h-1zM18 15h1v1h-1zM19 15h1v1h-1zM20 15h1v1h-1zM21 15h1v1h-1zM0 16h1v1h-1zM6 16h1v1h-1zM7 16h1v1h-1zM10 16h1v1h-1zM11 16h1v1h-1zM12 16h1v1h-1zM13 16h1v1h-1zM14 16h1v1h-1zM17 16h1v1h-1zM18 16h1v1h-1zM19 16h1v1h-1zM20 16h1v1h-1zM0 17h1v1h-1zM2 17h1v1h-1zM3 17h1v1h-1zM4 17h1v1h-1zM6 17h1v1h-1zM8 17h1v1h-1zM9 17h1v1h-1zM10 17h1v1h-1zM11 17h1v1h-1zM14 17h1v1h-1zM17 17h1v1h-1zM18 17h1v1h-1zM19 17h1v1h-1zM21 17h1v1h-1zM0 18h1v1h-1zM2 18h1v1h-1zM3 18h1v1h-1zM4 18h1v1h-1zM6 18h1v1h-1zM8 18h1v1h-1zM9 18h1v1h-1zM10 18h1v1h-1zM12 18h1v1h-1zM13 18h1v1h-1zM14 18h1v1h-1zM17 18h1v1h-1zM20 18h1v1h-1zM21 18h1v1h-1zM0 19h1v1h-1zM2 19h1v1h-1zM3 19h1v1h-1zM4 19h1v1h-1zM6 19h1v1h-1zM7 19h1v1h-1zM15 19h1v1h-1zM17 19h1v1h-1zM18 19h1v1h-1zM20 19h1v1h-1zM21 19h1v1h-1zM0 20h1v1h-1zM6 20h1v1h-1zM7 20h1v1h-1zM9 20h1v1h-1zM10 20h1v1h-1zM12 20h1v1h-1zM19 20h1v1h-1zM21 20h1v1h-1zM0 21h1v1h-1zM1 21h1v1h-1zM2 21h1v1h-1zM3 21h1v1h-1zM4 21h1v1h-1zM5 21h1v1h-1zM6 21h1v1h-1zM8 21h1v1h-1zM11 21h1v1h-1zM12 21h1v1h-1zM15 21h1v1h-1zM16 21h1v1h-1zM17 21h1v1h-1zM20 21h1v1h-1zM21 21h1v1h-1z" fill="#000"/></svg><div class="th" style="left:132px;top:2px"><div class="c c1"><span class="tt" style="left:11px;top:6.5px;transform:scale(0.500);color:#1c6ec4;font-weight:bold;">神奇像素</span><i style="left:11px;top:14px;width:7px;height:2px;background:#0b63b6"></i><span class="tt" style="left:11px;top:19.30000000000001px;transform:scale(0.190);color:#111;font-weight:bold;-webkit-text-stroke:0.5px #111;">总经理助理</span><span class="tt" style="left:11px;top:23px;transform:scale(0.230);color:#444;-webkit-text-stroke:0.7px #444;">Marketing Manager</span><span class="tt" style="left:60px;top:23px;transform:scale(0.195);color:#000;font-weight:bold;-webkit-text-stroke:0.9px #000;">北京神奇像素科技有限公司</span><i style="left:60px;top:38.80000000000001px;width:3px;height:1.5px;background:#1c6ec4"></i><span class="tt" style="left:68px;top:38.10000000000001px;transform:scale(0.210);color:#111;-webkit-text-stroke:1px #111;">010-88886666</span><i style="left:60px;top:43px;width:3px;height:1.5px;background:#1c6ec4"></i><span class="tt" style="left:68px;top:42.3px;transform:scale(0.210);color:#111;-webkit-text-stroke:1px #111;">13800008888</span><i style="left:60px;top:47.30000000000001px;width:3px;height:1.5px;background:#1c6ec4"></i><span class="tt" style="left:68px;top:46.60000000000001px;transform:scale(0.200);color:#111;-webkit-text-stroke:0.9px #111;">service@shenqixiangsu.com</span><i style="left:60px;top:51.80000000000001px;width:3px;height:1.5px;background:#1c6ec4"></i><span class="tt" style="left:68px;top:51.10000000000001px;transform:scale(0.240);color:#111;-webkit-text-stroke:0.9px #111;">www.shenqixiangsu.com</span><i style="left:60px;top:56.80000000000001px;width:3px;height:1.5px;background:#1c6ec4"></i><span class="tt" style="left:68px;top:56.10000000000001px;transform:scale(0.175);color:#111;-webkit-text-stroke:0.3px #111;">北京市朝阳区神奇路88号院8号楼</span></div></div><svg style="left:144px;top:54px" width="22" height="22" viewBox="0 0 22 22" shape-rendering="crispEdges"><path d="M0 0h1v1h-1zM1 0h1v1h-1zM2 0h1v1h-1zM3 0h1v1h-1zM4 0h1v1h-1zM5 0h1v1h-1zM6 0h1v1h-1zM7 0h1v1h-1zM8 0h1v1h-1zM9 0h1v1h-1zM12 0h1v1h-1zM13 0h1v1h-1zM15 0h1v1h-1zM16 0h1v1h-1zM17 0h1v1h-1zM18 0h1v1h-1zM19 0h1v1h-1zM20 0h1v1h-1zM21 0h1v1h-1zM0 1h1v1h-1zM6 1h1v1h-1zM7 1h1v1h-1zM8 1h1v1h-1zM10 1h1v1h-1zM12 1h1v1h-1zM14 1h1v1h-1zM15 1h1v1h-1zM21 1h1v1h-1zM0 2h1v1h-1zM2 2h1v1h-1zM3 2h1v1h-1zM4 2h1v1h-1zM6 2h1v1h-1zM9 2h1v1h-1zM12 2h1v1h-1zM15 2h1v1h-1zM17 2h1v1h-1zM18 2h1v1h-1zM19 2h1v1h-1zM21 2h1v1h-1zM0 3h1v1h-1zM2 3h1v1h-1zM3 3h1v1h-1zM4 3h1v1h-1zM6 3h1v1h-1zM7 3h1v1h-1zM8 3h1v1h-1zM10 3h1v1h-1zM15 3h1v1h-1zM17 3h1v1h-1zM18 3h1v1h-1zM19 3h1v1h-1zM21 3h1v1h-1zM0 4h1v1h-1zM2 4h1v1h-1zM3 4h1v1h-1zM4 4h1v1h-1zM6 4h1v1h-1zM7 4h1v1h-1zM9 4h1v1h-1zM12 4h1v1h-1zM13 4h1v1h-1zM14 4h1v1h-1zM15 4h1v1h-1zM17 4h1v1h-1zM18 4h1v1h-1zM19 4h1v1h-1zM21 4h1v1h-1zM0 5h1v1h-1zM6 5h1v1h-1zM8 5h1v1h-1zM10 5h1v1h-1zM11 5h1v1h-1zM12 5h1v1h-1zM13 5h1v1h-1zM15 5h1v1h-1zM21 5h1v1h-1zM0 6h1v1h-1zM1 6h1v1h-1zM2 6h1v1h-1zM3 6h1v1h-1zM4 6h1v1h-1zM5 6h1v1h-1zM6 6h1v1h-1zM14 6h1v1h-1zM15 6h1v1h-1zM16 6h1v1h-1zM17 6h1v1h-1zM18 6h1v1h-1zM19 6h1v1h-1zM20 6h1v1h-1zM21 6h1v1h-1zM5 7h1v1h-1zM8 7h1v1h-1zM9 7h1v1h-1zM12 7h1v1h-1zM14 7h1v1h-1zM15 7h1v1h-1zM16 7h1v1h-1zM19 7h1v1h-1zM21 7h1v1h-1zM1 8h1v1h-1zM4 8h1v1h-1zM6 8h1v1h-1zM7 8h1v1h-1zM9 8h1v1h-1zM10 8h1v1h-1zM11 8h1v1h-1zM13 8h1v1h-1zM14 8h1v1h-1zM16 8h1v1h-1zM19 8h1v1h-1zM20 8h1v1h-1zM21 8h1v1h-1zM5 9h1v1h-1zM6 9h1v1h-1zM8 9h1v1h-1zM9 9h1v1h-1zM11 9h1v1h-1zM12 9h1v1h-1zM13 9h1v1h-1zM14 9h1v1h-1zM16 9h1v1h-1zM19 9h1v1h-1zM21 9h1v1h-1zM1 10h1v1h-1zM4 10h1v1h-1zM5 10h1v1h-1zM8 10h1v1h-1zM9 10h1v1h-1zM11 10h1v1h-1zM12 10h1v1h-1zM13 10h1v1h-1zM14 10h1v1h-1zM16 10h1v1h-1zM17 10h1v1h-1zM19 10h1v1h-1zM0 11h1v1h-1zM1 11h1v1h-1zM3 11h1v1h-1zM4 11h1v1h-1zM5 11h1v1h-1zM7 11h1v1h-1zM8 11h1v1h-1zM9 11h1v1h-1zM11 11h1v1h-1zM13 11h1v1h-1zM14 11h1v1h-1zM17 11h1v1h-1zM18 11h1v1h-1zM19 11h1v1h-1zM20 11h1v1h-1zM21 11h1v1h-1zM2 12h1v1h-1zM3 12h1v1h-1zM7 12h1v1h-1zM8 12h1v1h-1zM9 12h1v1h-1zM11 12h1v1h-1zM12 12h1v1h-1zM13 12h1v1h-1zM14 12h1v1h-1zM15 12h1v1h-1zM17 12h1v1h-1zM18 12h1v1h-1zM0 13h1v1h-1zM3 13h1v1h-1zM7 13h1v1h-1zM8 13h1v1h-1zM9 13h1v1h-1zM10 13h1v1h-1zM11 13h1v1h-1zM13 13h1v1h-1zM15 13h1v1h-1zM0 14h1v1h-1zM2 14h1v1h-1zM3 14h1v1h-1zM5 14h1v1h-1zM6 14h1v1h-1zM9 14h1v1h-1zM10 14h1v1h-1zM12 14h1v1h-1zM14 14h1v1h-1zM15 14h1v1h-1zM16 14h1v1h-1zM18 14h1v1h-1zM0 15h1v1h-1zM1 15h1v1h-1zM2 15h1v1h-1zM3 15h1v1h-1zM4 15h1v1h-1zM5 15h1v1h-1zM6 15h1v1h-1zM8 15h1v1h-1zM11 15h1v1h-1zM12 15h1v1h-1zM13 15h1v1h-1zM14 15h1v1h-1zM15 15h1v1h-1zM16 15h1v1h-1zM18 15h1v1h-1zM19 15h1v1h-1zM20 15h1v1h-1zM21 15h1v1h-1zM0 16h1v1h-1zM6 16h1v1h-1zM7 16h1v1h-1zM10 16h1v1h-1zM11 16h1v1h-1zM12 16h1v1h-1zM13 16h1v1h-1zM14 16h1v1h-1zM17 16h1v1h-1zM18 16h1v1h-1zM19 16h1v1h-1zM20 16h1v1h-1zM0 17h1v1h-1zM2 17h1v1h-1zM3 17h1v1h-1zM4 17h1v1h-1zM6 17h1v1h-1zM8 17h1v1h-1zM9 17h1v1h-1zM10 17h1v1h-1zM11 17h1v1h-1zM14 17h1v1h-1zM17 17h1v1h-1zM18 17h1v1h-1zM19 17h1v1h-1zM21 17h1v1h-1zM0 18h1v1h-1zM2 18h1v1h-1zM3 18h1v1h-1zM4 18h1v1h-1zM6 18h1v1h-1zM8 18h1v1h-1zM9 18h1v1h-1zM10 18h1v1h-1zM12 18h1v1h-1zM13 18h1v1h-1zM14 18h1v1h-1zM17 18h1v1h-1zM20 18h1v1h-1zM21 18h1v1h-1zM0 19h1v1h-1zM2 19h1v1h-1zM3 19h1v1h-1zM4 19h1v1h-1zM6 19h1v1h-1zM7 19h1v1h-1zM15 19h1v1h-1zM17 19h1v1h-1zM18 19h1v1h-1zM20 19h1v1h-1zM21 19h1v1h-1zM0 20h1v1h-1zM6 20h1v1h-1zM7 20h1v1h-1zM9 20h1v1h-1zM10 20h1v1h-1zM12 20h1v1h-1zM19 20h1v1h-1zM21 20h1v1h-1zM0 21h1v1h-1zM1 21h1v1h-1zM2 21h1v1h-1zM3 21h1v1h-1zM4 21h1v1h-1zM5 21h1v1h-1zM6 21h1v1h-1zM8 21h1v1h-1zM11 21h1v1h-1zM12 21h1v1h-1zM15 21h1v1h-1zM16 21h1v1h-1zM17 21h1v1h-1zM20 21h1v1h-1zM21 21h1v1h-1z" fill="#000"/></svg><div class="th" style="left:4px;top:138px"><div class="c"><span class="tt" style="left:19px;top:5.800000000000011px;transform:scale(0.330);color:#000;font-weight:bold;">北京神奇像素科技有限公司</span><span class="tt" style="left:19px;top:12px;transform:scale(0.195);color:#222;-webkit-text-stroke:1.2px #222;">BeiJing ShenQiXiangSu Technology Co.,Ltd</span><span class="tt" style="left:34px;top:39.5px;transform:scale(0.260);color:#1c6ec4;font-weight:bold;">神奇像素</span><span class="tt" style="left:48px;top:39.80000000000001px;transform:scale(0.200);color:#333;">总经理助理</span><span class="tt" style="left:34px;top:45.80000000000001px;transform:scale(0.185);color:#000;font-weight:bold;-webkit-text-stroke:1.5px #000;">扫一扫关注我们的公众号</span><i style="left:73px;top:36.19999999999999px;width:5px;height:5px;border-radius:50% 50% 50% 0;background:#1f6fc6;transform:rotate(-45deg)"></i><span class="tt" style="left:79.5px;top:37.499999999999986px;transform:scale(0.270);color:#000;font-weight:bold;-webkit-text-stroke:1px #000;">电话：13800008888</span><i style="left:73px;top:42.80000000000001px;width:5px;height:5px;border-radius:50% 50% 50% 0;background:#1f6fc6;transform:rotate(-45deg)"></i><span class="tt" style="left:79.5px;top:44.10000000000001px;transform:scale(0.190);color:#000;-webkit-text-stroke:1.5px #000;">010-88886666</span><i style="left:73px;top:49.5px;width:5px;height:5px;border-radius:50% 50% 50% 0;background:#1f6fc6;transform:rotate(-45deg)"></i><span class="tt" style="left:79.5px;top:50.8px;transform:scale(0.190);color:#000;-webkit-text-stroke:1.5px #000;">service@shenqixiangsu.com</span><i style="left:73px;top:56.0px;width:5px;height:5px;border-radius:50% 50% 50% 0;background:#1f6fc6;transform:rotate(-45deg)"></i><span class="tt" style="left:79.5px;top:57.3px;transform:scale(0.170);color:#000;-webkit-text-stroke:1.5px #000;">www.shenqixiangsu.com/about</span></div></div><svg style="left:19px;top:188px" width="20" height="20" viewBox="0 0 20 20" shape-rendering="crispEdges"><path d="M0 0h1v1h-1zM1 0h1v1h-1zM2 0h1v1h-1zM3 0h1v1h-1zM4 0h1v1h-1zM5 0h1v1h-1zM6 0h1v1h-1zM13 0h1v1h-1zM14 0h1v1h-1zM15 0h1v1h-1zM16 0h1v1h-1zM17 0h1v1h-1zM18 0h1v1h-1zM19 0h1v1h-1zM0 1h1v1h-1zM6 1h1v1h-1zM7 1h1v1h-1zM8 1h1v1h-1zM12 1h1v1h-1zM13 1h1v1h-1zM19 1h1v1h-1zM0 2h1v1h-1zM2 2h1v1h-1zM3 2h1v1h-1zM4 2h1v1h-1zM6 2h1v1h-1zM7 2h1v1h-1zM8 2h1v1h-1zM9 2h1v1h-1zM11 2h1v1h-1zM12 2h1v1h-1zM13 2h1v1h-1zM15 2h1v1h-1zM16 2h1v1h-1zM17 2h1v1h-1zM19 2h1v1h-1zM0 3h1v1h-1zM2 3h1v1h-1zM3 3h1v1h-1zM4 3h1v1h-1zM6 3h1v1h-1zM7 3h1v1h-1zM10 3h1v1h-1zM12 3h1v1h-1zM13 3h1v1h-1zM15 3h1v1h-1zM16 3h1v1h-1zM17 3h1v1h-1zM19 3h1v1h-1zM0 4h1v1h-1zM2 4h1v1h-1zM3 4h1v1h-1zM4 4h1v1h-1zM6 4h1v1h-1zM8 4h1v1h-1zM9 4h1v1h-1zM11 4h1v1h-1zM12 4h1v1h-1zM13 4h1v1h-1zM15 4h1v1h-1zM16 4h1v1h-1zM17 4h1v1h-1zM19 4h1v1h-1zM0 5h1v1h-1zM6 5h1v1h-1zM9 5h1v1h-1zM11 5h1v1h-1zM13 5h1v1h-1zM19 5h1v1h-1zM0 6h1v1h-1zM1 6h1v1h-1zM2 6h1v1h-1zM3 6h1v1h-1zM4 6h1v1h-1zM5 6h1v1h-1zM6 6h1v1h-1zM7 6h1v1h-1zM12 6h1v1h-1zM13 6h1v1h-1zM14 6h1v1h-1zM15 6h1v1h-1zM16 6h1v1h-1zM17 6h1v1h-1zM18 6h1v1h-1zM19 6h1v1h-1zM0 7h1v1h-1zM1 7h1v1h-1zM2 7h1v1h-1zM3 7h1v1h-1zM4 7h1v1h-1zM6 7h1v1h-1zM8 7h1v1h-1zM9 7h1v1h-1zM11 7h1v1h-1zM12 7h1v1h-1zM13 7h1v1h-1zM15 7h1v1h-1zM17 7h1v1h-1zM0 8h1v1h-1zM2 8h1v1h-1zM4 8h1v1h-1zM5 8h1v1h-1zM6 8h1v1h-1zM8 8h1v1h-1zM12 8h1v1h-1zM13 8h1v1h-1zM14 8h1v1h-1zM16 8h1v1h-1zM0 9h1v1h-1zM2 9h1v1h-1zM3 9h1v1h-1zM6 9h1v1h-1zM8 9h1v1h-1zM9 9h1v1h-1zM10 9h1v1h-1zM11 9h1v1h-1zM12 9h1v1h-1zM13 9h1v1h-1zM16 9h1v1h-1zM17 9h1v1h-1zM19 9h1v1h-1zM0 10h1v1h-1zM1 10h1v1h-1zM4 10h1v1h-1zM5 10h1v1h-1zM6 10h1v1h-1zM8 10h1v1h-1zM9 10h1v1h-1zM11 10h1v1h-1zM16 10h1v1h-1zM17 10h1v1h-1zM18 10h1v1h-1zM0 11h1v1h-1zM1 11h1v1h-1zM5 11h1v1h-1zM6 11h1v1h-1zM8 11h1v1h-1zM9 11h1v1h-1zM10 11h1v1h-1zM11 11h1v1h-1zM12 11h1v1h-1zM16 11h1v1h-1zM17 11h1v1h-1zM18 11h1v1h-1zM19 11h1v1h-1zM2 12h1v1h-1zM8 12h1v1h-1zM10 12h1v1h-1zM11 12h1v1h-1zM14 12h1v1h-1zM18 12h1v1h-1zM19 12h1v1h-1zM0 13h1v1h-1zM1 13h1v1h-1zM2 13h1v1h-1zM3 13h1v1h-1zM4 13h1v1h-1zM5 13h1v1h-1zM6 13h1v1h-1zM7 13h1v1h-1zM9 13h1v1h-1zM13 13h1v1h-1zM17 13h1v1h-1zM0 14h1v1h-1zM6 14h1v1h-1zM10 14h1v1h-1zM11 14h1v1h-1zM12 14h1v1h-1zM15 14h1v1h-1zM19 14h1v1h-1zM0 15h1v1h-1zM2 15h1v1h-1zM3 15h1v1h-1zM4 15h1v1h-1zM6 15h1v1h-1zM10 15h1v1h-1zM15 15h1v1h-1zM16 15h1v1h-1zM17 15h1v1h-1zM19 15h1v1h-1zM0 16h1v1h-1zM2 16h1v1h-1zM3 16h1v1h-1zM4 16h1v1h-1zM6 16h1v1h-1zM9 16h1v1h-1zM10 16h1v1h-1zM11 16h1v1h-1zM12 16h1v1h-1zM13 16h1v1h-1zM14 16h1v1h-1zM15 16h1v1h-1zM16 16h1v1h-1zM17 16h1v1h-1zM18 16h1v1h-1zM19 16h1v1h-1zM0 17h1v1h-1zM2 17h1v1h-1zM3 17h1v1h-1zM4 17h1v1h-1zM6 17h1v1h-1zM9 17h1v1h-1zM11 17h1v1h-1zM12 17h1v1h-1zM13 17h1v1h-1zM14 17h1v1h-1zM15 17h1v1h-1zM17 17h1v1h-1zM18 17h1v1h-1zM0 18h1v1h-1zM6 18h1v1h-1zM7 18h1v1h-1zM8 18h1v1h-1zM9 18h1v1h-1zM13 18h1v1h-1zM16 18h1v1h-1zM17 18h1v1h-1zM0 19h1v1h-1zM1 19h1v1h-1zM2 19h1v1h-1zM3 19h1v1h-1zM4 19h1v1h-1zM5 19h1v1h-1zM6 19h1v1h-1zM10 19h1v1h-1zM12 19h1v1h-1zM13 19h1v1h-1zM16 19h1v1h-1zM19 19h1v1h-1z" fill="#000"/></svg><div class="th" style="left:132px;top:138px"><div class="c"><i style="left:16.200000000000045px;top:0px;width:1.7px;height:28px;background:#000"></i><i style="left:16.200000000000045px;top:44px;width:1.7px;height:28px;background:#000"></i><span class="tt" style="left:56px;top:19.5px;transform:scale(0.420);color:#111;font-weight:bold;">神奇像素</span><span class="tt" style="left:79px;top:20.80000000000001px;transform:scale(0.230);color:#111;font-weight:bold;">总经理助理</span><i style="left:55px;top:27px;width:40px;height:6px;background:#000"></i><span class="tt" style="left:57px;top:28.30000000000001px;transform:scale(0.280);color:#fff;font-weight:bold;">北京神奇像素科技</span><i style="left:56px;top:38.2px;width:7.600px;height:7.600px;border-radius:50%;background:#000"></i><i style="left:58.5px;top:39.7px;width:2.500px;height:2.500px;border-radius:50%;background:#fff"></i><span class="tt" style="left:65px;top:40.5px;transform:scale(0.270);color:#000;font-weight:bold;-webkit-text-stroke:1.2px #000;">13800008888</span><i style="left:56px;top:46.800000000000026px;width:7.600px;height:7.600px;border-radius:50%;background:#000"></i><i style="left:58.5px;top:48.300000000000026px;width:2.500px;height:2.500px;border-radius:50%;background:#fff"></i><span class="tt" style="left:65px;top:49.10000000000002px;transform:scale(0.260);color:#000;font-weight:bold;-webkit-text-stroke:1.2px #000;">service@shenqixiangsu.com</span><i style="left:56px;top:55.59999999999998px;width:7.600px;height:7.600px;border-radius:50%;background:#000"></i><i style="left:58.5px;top:57.09999999999998px;width:2.500px;height:2.500px;border-radius:50%;background:#fff"></i><span class="tt" style="left:65px;top:57.89999999999998px;transform:scale(0.225);color:#000;font-weight:bold;-webkit-text-stroke:1.2px #000;">北京市朝阳区神奇路88号院8号楼</span></div></div><div class="th" style="left:4px;top:274px"><div class="c"><span class="tt" style="left:13px;top:33.5px;transform:scale(0.420);color:#f00000;font-weight:bold;">神 奇 像</span><span class="tt" style="left:13px;top:40.5px;transform:scale(0.260);color:#222;font-weight:bold;">总经理</span><span class="tt" style="left:20px;top:40.299999999999955px;transform:scale(0.220);color:#555;">Manager</span><i style="left:63px;top:18px;width:4px;height:37px;background:#f40000"></i><i style="left:67px;top:18px;width:50px;height:37px;background:#f4f4f4"></i><i style="left:64px;top:24.299999999999955px;width:2.5px;height:1.2px;background:#fff"></i><span class="tt" style="left:70px;top:23.399999999999956px;transform:scale(0.320);color:#333;-webkit-text-stroke:0.4px #333;">13800008888</span><i style="left:64px;top:31.5px;width:2.5px;height:1.2px;background:#fff"></i><span class="tt" style="left:70px;top:30.6px;transform:scale(0.320);color:#333;-webkit-text-stroke:0.4px #333;">sqxs@shenqixiangsu.com</span><i style="left:64px;top:39.5px;width:2.5px;height:1.2px;background:#fff"></i><span class="tt" style="left:70px;top:38.6px;transform:scale(0.340);color:#333;-webkit-text-stroke:0.4px #333;">www.shenqixiangsu.com</span><i style="left:64px;top:46.5px;width:2.5px;height:1.2px;background:#fff"></i><span class="tt" style="left:70px;top:45.6px;transform:scale(0.300);color:#333;-webkit-text-stroke:0.4px #333;">北京市朝阳区神奇路88号</span></div></div><div class="th" style="left:132px;top:274px;border:none"><i style="left:0;top:0;width:120px;height:100px;box-shadow:inset 0 0 0 1px #828282"></i><div class="c" style="left:1px;top:14px"><i style="left:3px;top:-3px;width:4px;height:39px;background:#ff0000"></i><i style="left:3px;top:28px;width:7px;height:7px;background:#ff0000"></i><i style="left:7px;top:-3px;width:7px;height:31px;background:#ffc222"></i><i style="left:14px;top:-3px;width:4px;height:26px;background:#7dc21e"></i><span class="tt" style="left:20px;top:18.799999999999955px;transform:scale(0.400);color:#06204a;font-weight:bold;-webkit-text-stroke:0.4px #06204a;letter-spacing:2px;">神奇像</span><span class="tt" style="left:43px;top:20px;transform:scale(0.230);color:#3a6fae;-webkit-text-stroke:1px #3a6fae;">总经理助</span><span class="tt" style="left:95px;top:9.800000000000011px;transform:scale(0.350);color:#06204a;font-weight:bold;-webkit-text-stroke:1.5px #06204a;">LOGO</span><i style="left:12.799999999999955px;top:50px;width:4px;height:4px;border:1.200px solid #06204a;transform:rotate(45deg)"></i><i style="left:58px;top:50px;width:4px;height:4px;background:#06204a;transform:rotate(45deg)"></i><i style="left:12.799999999999955px;top:56.39999999999998px;width:4px;height:4px;background:#06204a;transform:rotate(45deg)"></i><i style="left:58px;top:56.39999999999998px;width:4px;height:4px;background:#06204a;transform:rotate(45deg)"></i><span class="tt" style="left:22px;top:50.700000000000045px;transform:scale(0.290);color:#1a4f90;-webkit-text-stroke:0.5px #1a4f90;">13800008888</span><span class="tt" style="left:22px;top:57.10000000000002px;transform:scale(0.270);color:#1a4f90;-webkit-text-stroke:0.5px #1a4f90;">010-88886666</span><span class="tt" style="left:68px;top:50.700000000000045px;transform:scale(0.280);color:#06204a;-webkit-text-stroke:0.7px #06204a;">sqxs@shenqixiangsu.com</span><span class="tt" style="left:68px;top:57.10000000000002px;transform:scale(0.290);color:#06204a;-webkit-text-stroke:0.7px #06204a;">www.shenqixiangsu.com</span><i style="left:0px;top:62px;width:118px;height:11px;background:#00a8c2"></i><i style="left:12px;top:64.5px;width:5px;height:5px;border-radius:50%;border:1.500px dotted #fff"></i><span class="tt" style="left:22px;top:65.79999999999995px;transform:scale(0.220);color:#fff;font-weight:bold;-webkit-text-stroke:1.2px #fff;">北京市朝阳区神奇路88号</span></div><i style="left:0;top:0;width:120px;height:100px;z-index:5;background-image:conic-gradient(transparent 25%,#0078d7 0 50%,transparent 0 75%,#0078d7 0);background-size:2px 2px"></i></div><div class="th" style="left:4px;top:410px"><div class="c"><span class="tt" style="left:63px;top:10.299999999999955px;transform:scale(0.290);color:#000;font-weight:bold;">北京神奇像素科技有限公司</span></div></div><div class="th" style="left:132px;top:410px"><div class="c"></div><svg style="left:0;top:0" width="118" height="86" viewBox="0 0 118 86"><path d="M0 0h48.500L73.500 52H0z" fill="#27418c"/><path d="M48.500 0L73.500 52" stroke="#000" stroke-width="1.500" fill="none"/></svg></div><div class="lb" style="left:4px;top:104.5px">简约01</div><div class="lb" style="left:132px;top:104.5px">简约02</div><div class="lb" style="left:4px;top:240.5px">简约03</div><div class="lb" style="left:132px;top:240.5px">简约04</div><div class="lb" style="left:4px;top:376.5px">简约05</div><div class="lb" style="left:132px;top:376.5px"><span style="display:inline-block;background:#0078d7;color:#fff;outline:1px dotted #e8a060;outline-offset:-1px;padding:0 2px;height:17px;line-height:16px">简约06</span></div><div class="a" style="left:274px;top:0;width:15px;height:435px;background:#f0f0f0"></div><div class="a" style="left:274px;top:17px;width:15px;height:218px;background:#cdcdcd"></div><svg style="left:277.5px;top:6px" width="8" height="7" viewBox="0 0 8 7" fill="none" stroke="#454545" stroke-width="2"><path d="M.8 5.600L4 2 7.200 5.600"/></svg><svg style="left:277.5px;top:423px" width="8" height="7" viewBox="0 0 8 7" fill="none" stroke="#454545" stroke-width="2"><path d="M.8 1.400L4 5 7.200 1.400"/></svg></div>
<div class="a" style="left:650px;top:649px;width:290px;height:30px;background:linear-gradient(#ffffff 0,#f1f3f4 40%,#e2e5e8 75%,#d7dbdf 100%)"></div>
<svg style="left:656px;top:654px" width="20" height="20" viewBox="0 0 20 20" fill="none" stroke="#b2b2b2"><path d="M3.500 7.500a6.500 6.500 0 0 1 12.300-1" stroke-width="1.300"/><path d="M13.300 6.800l2.800.3.600-2.800" stroke-width="1.300"/></svg>
<div class="a" style="left:656px;top:660px;font-size:10px;line-height:10px;color:#a8a8a8">A</div><div class="a" style="left:667px;top:664px;font-size:10.500px;line-height:10px;color:#a8a8a8">B</div>
<div class="a" style="left:679px;top:656px;line-height:16px;font-size:12px;color:#8a8a8a;white-space:nowrap">重命名</div>
<svg style="left:723px;top:654px" width="20" height="20" viewBox="0 0 20 20"><circle cx="10" cy="10" r="9.800" fill="#a3a3a3"/><path d="M6.300 6.300l7.400 7.400M13.700 6.300l-7.400 7.400" stroke="#fff" stroke-width="1.800"/></svg>
<div class="a" style="left:746px;top:656px;line-height:16px;font-size:12px;color:#8a8a8a;white-space:nowrap">删除</div>
<style>
#sb{position:absolute;left:1px;top:683px;width:944px;height:29px;background:linear-gradient(#dde1e5 0,#e4e7ea 30%,#eff1f3 70%,#f8f9fa 100%)}
.st{position:absolute;top:691px;line-height:16px;font-size:12px;white-space:nowrap}
.ss{position:absolute;top:689px;width:2px;height:19px;border-left:1px solid #a9adb1;border-right:1px solid #fafafa}
</style>
<div id="sb"></div>
<div class="st" style="left:7px;letter-spacing:.1px">神奇名片设计打印软件 4.0</div><div class="ss" style="left:156px"></div>
<div class="st" style="left:165px">当前页面：名片背面</div><div class="ss" style="left:280px"></div>
<div class="st" style="left:289px">缩放：16%</div><div class="ss" style="left:357px"></div>
<div class="st" style="left:365px;word-spacing:1.200px">名片尺寸：90.0 毫米 x 54.0 毫米, 600 像素/英寸</div><div class="ss" style="left:636px"></div>
<div class="st" style="left:643px;word-spacing:1.200px;letter-spacing:.1px">鼠标位置：20.3 毫米，-38.6 毫米</div>
<svg style="left:932px;top:699px" width="12" height="12" viewBox="0 0 12 12" shape-rendering="crispEdges" fill="#b0b4b8"><path d="M9 1h2v2H9zM5 5h2v2H5zM9 5h2v2H9zM1 9h2v2H1zM5 9h2v2H5zM9 9h2v2H9z"/></svg>
</body></html>
